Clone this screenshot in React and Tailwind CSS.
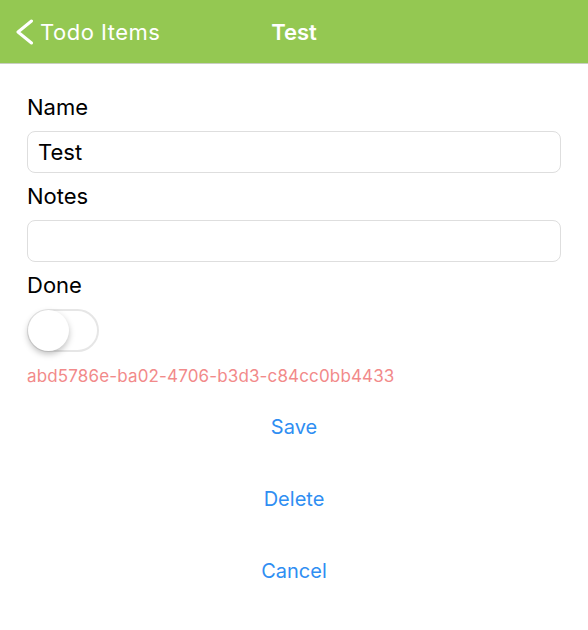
import React, { useState } from 'react';

export default function App() {
    const [name, setName] = useState('Test');
    const [notes, setNotes] = useState('');
    const [done, setDone] = useState(false);

    return (
        <div className="w-[588px] h-[630px] bg-white font-['Inter',sans-serif] overflow-hidden">
            {/* Nav bar */}
            <header className="relative h-[64px] bg-[#94c852] border-b border-[#c9cfc2] flex items-center">
                <button className="flex items-center pl-[14px] text-white">
                    <svg width="21" height="26" viewBox="0 0 21 26" fill="none" className="mr-[5px]">
                        <path d="M17.5 2 L4 13 L17.5 24" stroke="white" strokeWidth="3" strokeLinecap="round" strokeLinejoin="round" />
                    </svg>
                    <span className="text-[22px] leading-none tracking-[0.5px]">Todo Items</span>
                </button>
                <h1 className="absolute left-0 right-0 text-center text-white text-[22px] font-semibold leading-none pointer-events-none">
                    Test
                </h1>
            </header>

            <div className="px-[27px] pt-[31px] flex flex-col gap-[11px]">
                <label className="text-[22px] leading-[25px] text-black">Name</label>
                <input
                    value={name}
                    onChange={(e) => setName(e.target.value)}
                    className="h-[42px] w-full rounded-[8px] border border-[#dedede] px-[10px] text-[22px] text-black outline-none"
                />
                <label className="text-[22px] leading-[25px] text-black">Notes</label>
                <input
                    value={notes}
                    onChange={(e) => setNotes(e.target.value)}
                    className="h-[42px] w-full rounded-[8px] border border-[#dedede] px-[10px] text-[22px] text-black outline-none"
                />
                <label className="text-[22px] leading-[25px] text-black">Done</label>
                <button
                    onClick={() => setDone(!done)}
                    className={
                        done
                            ? "relative w-[72px] h-[43px] rounded-full bg-[#4cd964] border-2 border-[#4cd964]"
                            : "relative w-[72px] h-[43px] rounded-full bg-white border-2 border-[#e6e6e6]"
                    }
                >
                    <span
                        className={
                            done
                                ? "absolute top-[-1px] right-[-1px] w-[41px] h-[41px] rounded-full bg-white shadow-[0_3px_6px_rgba(0,0,0,0.25)]"
                                : "absolute top-[-1px] left-[-1px] w-[41px] h-[41px] rounded-full bg-white shadow-[0_3px_6px_rgba(0,0,0,0.25)]"
                        }
                    />
                </button>
                <p className="mt-[2px] text-[17px] leading-[22px] text-[#f28a8a] tracking-[0.15px]">
                    abd5786e-ba02-4706-b3d3-c84cc0bb4433
                </p>
            </div>

            {/* Actions */}
            <div className="mt-[4px] flex flex-col">
                <button className="h-[72px] text-[20px] text-[#2f8ef2]">Save</button>
                <button className="h-[72px] text-[20px] text-[#2f8ef2]">Delete</button>
                <button className="h-[72px] text-[20px] text-[#2f8ef2]">Cancel</button>
            </div>
        </div>
    );
}
